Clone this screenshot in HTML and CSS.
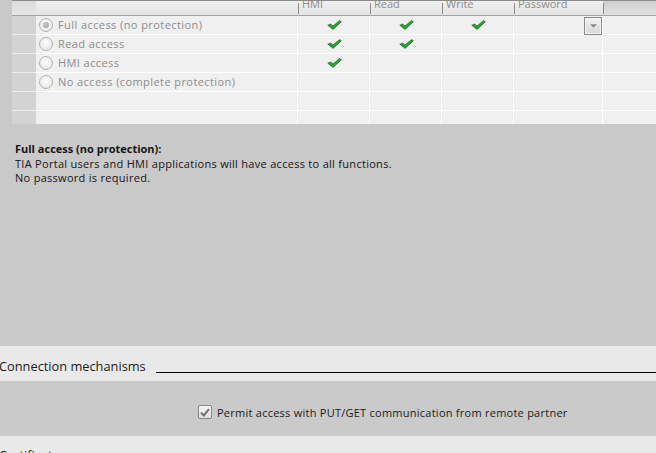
FILE: index.html
```html
<!DOCTYPE html>
<html>
<head>
<meta charset="utf-8">
<link rel="stylesheet" href="styles.css">
</head>
<body>
<div class="page">
  <section class="protect">
    <div class="grid">
      <div class="hd hd-rowhead"></div>
      <div class="hd hd-main"></div>
      <div class="hd sep"><span>HMI</span></div>
      <div class="hd sep"><span>Read</span></div>
      <div class="hd sep"><span>Write</span></div>
      <div class="hd sep"><span>Password</span></div>
      <div class="hd hd-last sep"></div>

      <div class="rh"></div>
      <div class="cell main"><span class="radio on"></span><span class="lbl">Full access (no protection)</span></div>
      <div class="cell ck"><svg class="tick" viewBox="0 0 15 10"><path d="M0.8 5.2 L3.6 4 L6 6 L12.6 0.6 L14.4 1.8 L6 9.4 Z"/></svg></div>
      <div class="cell ck"><svg class="tick" viewBox="0 0 15 10"><path d="M0.8 5.2 L3.6 4 L6 6 L12.6 0.6 L14.4 1.8 L6 9.4 Z"/></svg></div>
      <div class="cell ck"><svg class="tick" viewBox="0 0 15 10"><path d="M0.8 5.2 L3.6 4 L6 6 L12.6 0.6 L14.4 1.8 L6 9.4 Z"/></svg></div>
      <div class="cell pw"><span class="dd"><svg viewBox="0 0 8 4" class="dd-arrow"><path d="M0 0 H8 L4 4 Z"/></svg></span></div>
      <div class="cell last"></div>

      <div class="rh"></div>
      <div class="cell main"><span class="radio"></span><span class="lbl">Read access</span></div>
      <div class="cell ck"><svg class="tick" viewBox="0 0 15 10"><path d="M0.8 5.2 L3.6 4 L6 6 L12.6 0.6 L14.4 1.8 L6 9.4 Z"/></svg></div>
      <div class="cell ck"><svg class="tick" viewBox="0 0 15 10"><path d="M0.8 5.2 L3.6 4 L6 6 L12.6 0.6 L14.4 1.8 L6 9.4 Z"/></svg></div>
      <div class="cell"></div>
      <div class="cell"></div>
      <div class="cell last"></div>

      <div class="rh"></div>
      <div class="cell main"><span class="radio"></span><span class="lbl">HMI access</span></div>
      <div class="cell ck"><svg class="tick" viewBox="0 0 15 10"><path d="M0.8 5.2 L3.6 4 L6 6 L12.6 0.6 L14.4 1.8 L6 9.4 Z"/></svg></div>
      <div class="cell"></div>
      <div class="cell"></div>
      <div class="cell"></div>
      <div class="cell last"></div>

      <div class="rh"></div>
      <div class="cell main"><span class="radio"></span><span class="lbl">No access (complete protection)</span></div>
      <div class="cell"></div>
      <div class="cell"></div>
      <div class="cell"></div>
      <div class="cell"></div>
      <div class="cell last"></div>

      <div class="rh"></div>
      <div class="cell main"></div>
      <div class="cell"></div>
      <div class="cell"></div>
      <div class="cell"></div>
      <div class="cell"></div>
      <div class="cell last"></div>

      <div class="rh"></div>
      <div class="cell main"></div>
      <div class="cell"></div>
      <div class="cell"></div>
      <div class="cell"></div>
      <div class="cell"></div>
      <div class="cell last"></div>
    </div>
  </section>

  <section class="info">
    <p class="info-title">Full access (no protection):</p>
    <p>TIA Portal users and HMI applications will have access to all functions.</p>
    <p>No password is required.</p>
  </section>

  <div class="section-head">
    <span class="section-title">Connection mechanisms</span>
    <span class="rule"></span>
  </div>

  <section class="conn">
    <label class="chk">
      <span class="box"><svg viewBox="0 0 10 9" class="box-tick"><path d="M1 4.6 L3.8 7.4 L9 1.2"/></svg></span>
      <span class="chk-text">Permit access with PUT/GET communication from remote partner</span>
    </label>
  </section>

  <div class="section-head cert">
    <span class="section-title">Certificate manager</span>
    <span class="rule"></span>
  </div>
</div>
</body>
</html>
```

FILE: styles.css
```css
* { box-sizing: border-box; margin: 0; padding: 0; }

html, body {
  width: 656px;
  height: 453px;
  overflow: hidden;
  background: #e9e9e9;
}

body {
  font-family: "Open Sans", "Liberation Sans", sans-serif;
  color: #1a1a1a;
}

.page {
  width: 656px;
  height: 453px;
  overflow: hidden;
  display: flex;
  flex-direction: column;
}

/* ---------- protection table ---------- */
.protect {
  height: 124px;
  flex: none;
  overflow: hidden;
  background: #c9c9c9;
  padding-left: 12px;
}

.grid {
  display: grid;
  grid-template-columns: 24px 262px 72px 72px 72px 89px 53px;
  grid-template-rows: 16px;
  grid-auto-rows: 19px;
}

.hd {
  height: 16px;
  border-top: 1px solid #8a8a8a;
  border-bottom: 1px solid #a3a3a3;
  background: linear-gradient(#f0f0f0, #e4e4e4);
  overflow: hidden;
  font-size: 11px;
  line-height: 11px;
  color: #8a8a8a;
  padding-left: 4px;
}

.hd span {
  display: block;
  margin-top: -3px;
}

.hd.sep {
  background:
    linear-gradient(#8a8a8a, #8a8a8a) left 2px / 1px 11px no-repeat,
    linear-gradient(#f0f0f0, #e4e4e4);
}

.hd-rowhead {
  background: linear-gradient(#dcdcdc, #e6e6e6);
}

.hd.hd-last {
  background:
    linear-gradient(#8a8a8a, #8a8a8a) left 2px / 1px 11px no-repeat,
    linear-gradient(#cfcfcf, #e2e2e2);
}

.rh {
  background: #d3d3d3;
  border-bottom: 1px solid #ececec;
}

.cell {
  background: #f0f0f0;
  border-bottom: 1px solid #ffffff;
  border-right: 1px solid #ffffff;
  display: flex;
  align-items: center;
}

.cell.last { border-right: none; }

.main {
  padding-left: 3px;
  gap: 5px;
}

.radio {
  width: 14px;
  height: 14px;
  border-radius: 50%;
  border: 1px solid #b2b2b2;
  background: radial-gradient(circle at 50% 40%, #fbfbfb, #e4e4e4);
  display: flex;
  align-items: center;
  justify-content: center;
  flex: none;
  margin-top: -1px;
}

.radio.on::after {
  content: "";
  width: 6px;
  height: 6px;
  border-radius: 50%;
  background: radial-gradient(circle at 40% 35%, #c8c8c8, #9a9a9a);
}

.lbl {
  font-size: 11px;
  color: #8c8c8c;
  letter-spacing: 0.42px;
  white-space: nowrap;
  margin-top: -1px;
}

.ck { justify-content: center; }

.tick {
  width: 15px;
  height: 10px;
  margin-left: 1px;
  margin-top: -1px;
}

.tick path {
  fill: #27a534;
  stroke: #146d1e;
  stroke-width: 0.7;
  stroke-linejoin: round;
}

.pw {
  justify-content: flex-end;
  padding-right: 0;
}

.dd {
  width: 18px;
  height: 18px;
  border: 1px solid #8a8a8a;
  box-shadow: inset 0 0 0 1px #f4f4f4;
  background: linear-gradient(#f2f2f2, #d8d8d8);
  display: flex;
  align-items: center;
  justify-content: center;
  margin-top: 1px;
}

.dd-arrow {
  width: 7px;
  height: 4px;
  fill: #8a8a8a;
}

/* ---------- info text ---------- */
.info {
  height: 222px;
  flex: none;
  background: #c9c9c9;
  padding: 18px 0 0 15px;
  font-size: 11px;
  line-height: 14.5px;
  color: #151515;
  letter-spacing: 0.29px;
}

.info-title { font-weight: 700; letter-spacing: 0; }

/* ---------- section heading ---------- */
.section-head {
  height: 35px;
  flex: none;
  background: #e9e9e9;
  display: flex;
  align-items: flex-end;
  padding-bottom: 7px;
}

.section-title {
  font-size: 12.8px;
  line-height: 16px;
  color: #1a1a1a;
  margin-left: -1px;
  white-space: nowrap;
}

.rule {
  flex: 1;
  height: 1px;
  background: #000;
  margin-left: 10px;
  margin-bottom: 1px;
}

.cert {
  height: 18px;
  align-items: flex-start;
  padding-top: 11px;
  padding-bottom: 0;
}

.cert .rule { display: none; }

/* ---------- connection ---------- */
.conn {
  height: 55px;
  flex: none;
  background: #cacaca;
  padding: 24px 0 0 198px;
}

.chk {
  display: flex;
  align-items: center;
  gap: 5px;
  height: 14px;
}

.box {
  width: 14px;
  height: 14px;
  border: 1px solid #878787;
  border-radius: 2px;
  background: linear-gradient(#f7f7f7, #dedede);
  display: flex;
  align-items: center;
  justify-content: center;
  flex: none;
}

.box-tick {
  width: 10px;
  height: 9px;
  fill: none;
  stroke: #707070;
  stroke-width: 2;
}

.chk-text {
  font-size: 11px;
  color: #1a1a1a;
  letter-spacing: 0.25px;
  white-space: nowrap;
  margin-top: 1px;
}
```
